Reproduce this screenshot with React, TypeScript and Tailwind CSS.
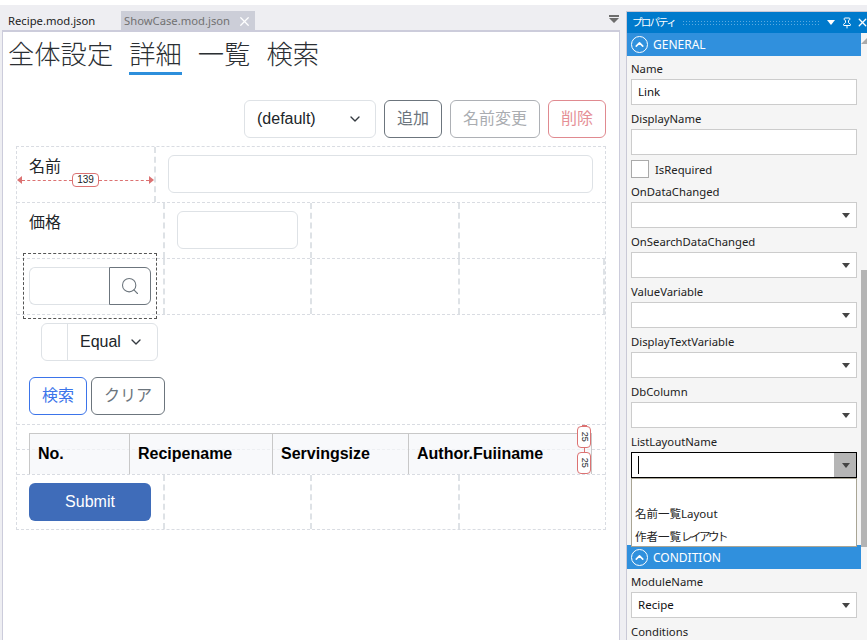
import React from 'react';
import { ChevronDown, ChevronUp, Pin, Search, X } from 'lucide-react';

const sans = "font-['Liberation_Sans','Noto_Sans_CJK_JP',sans-serif]";
const ide = "font-['Noto_Sans','Noto_Sans_CJK_JP',sans-serif]";
const cell = 'border-r-2 border-dashed border-[#dee2e6] last:border-r-0';
const row = 'flex border-b border-dashed border-[#d9dce2] last:border-b-0';

const SectionBar = ({ title, tall }: { title: string; tall?: boolean }) => (
  <div className={`flex shrink-0 items-center gap-[5px] bg-[#3090dd] pl-[4px] text-[12px] text-white ${tall ? 'h-[24px]' : 'h-[23px]'}`}>
    <span className="flex h-[17px] w-[17px] items-center justify-center rounded-full border border-white">
      <ChevronUp size={13} strokeWidth={3} />
    </span>
    <span className={tall ? 'pt-[1px]' : ''}>{title}</span>
  </div>
);

const ComboArrow = () => (
  <svg width="8" height="5" viewBox="0 0 8 5" className="absolute right-[6px] top-[10px]">
    <path d="M0 0h8L4 5z" fill="#444" />
  </svg>
);

const FieldLabel = ({ children }: { children: React.ReactNode }) => (
  <div className="h-[23px] pt-[3px] text-[11.3px] leading-[20px] text-[#222]">{children}</div>
);

const Field = ({ label, value, combo }: { label: string; value?: string; combo?: boolean }) => (
  <div className="flex h-[50px] shrink-0 flex-col">
    <FieldLabel>{label}</FieldLabel>
    <div className="relative flex h-[26px] w-[226px] items-center border border-[#ccc] bg-white pl-[6px] text-[11.5px] text-[#111]">
      {value}
      {combo && <ComboArrow />}
    </div>
  </div>
);

const PropertyPanel = () => (
  <aside className={`flex h-[629px] w-[241px] shrink-0 flex-col self-end overflow-hidden border-l border-t border-[#c9c9d6] bg-[#f5f5f5] ${ide}`}>
    <div className="flex h-[21px] shrink-0 items-center bg-[#007acc] pl-[5px] text-white">
      <span className="w-[50px] shrink-0 whitespace-nowrap text-[10.5px] tracking-[-1.8px]">プロパティ</span>
      <div className="h-[6px] w-[138px] shrink-0 bg-[radial-gradient(#5aa9e0_0.7px,transparent_0.8px)] bg-[length:3px_3px]" />
      <svg width="8" height="5" viewBox="0 0 8 5" className="ml-[7px] shrink-0">
        <path d="M0 0h8L4 5z" fill="#fff" />
      </svg>
      <Pin size={12} className="ml-[6px] shrink-0" />
      <X size={13} strokeWidth={2.5} className="ml-[3px] shrink-0" />
    </div>
    <div className="relative flex min-h-0 flex-1">
      <div className="flex w-[234px] shrink-0 flex-col">
        <SectionBar title="GENERAL" />
        <div className="flex flex-col pl-[4px]">
          <Field label="Name" value="Link" />
          <Field label="DisplayName" />
          <div className="flex h-[23px] shrink-0 items-start gap-[6px] pt-[4px] text-[11.3px] text-[#222]">
            <div className="h-[18px] w-[18px] border border-[#aaa] bg-white" />
            <span className="leading-[20px]">IsRequired</span>
          </div>
          <Field label="OnDataChanged" combo />
          <Field label="OnSearchDataChanged" combo />
          <Field label="ValueVariable" combo />
          <Field label="DisplayTextVariable" combo />
          <Field label="DbColumn" combo />
          <div className="relative flex h-[116px] shrink-0 flex-col">
            <FieldLabel>ListLayoutName</FieldLabel>
            <div className="relative flex h-[26px] w-[226px] items-center border border-black bg-white pl-[6px]">
              <div className="h-[18px] w-px bg-black" />
              <div className="absolute right-0 top-0 h-full w-[22px] bg-[#b5b5b5]" />
              <ComboArrow />
            </div>
            <div className="absolute left-0 top-[49px] z-10 flex h-[69px] w-[226px] flex-col justify-end border border-[#a9a595] bg-white pl-[3px] text-[11.5px] text-[#222]">
              <div className="flex h-[22px] items-center pt-[2px]">名前一覧Layout</div>
              <div className="flex h-[22px] items-center pt-[4px]">
                作者一覧<span className="tracking-[-2.5px]">レイアウト</span>
              </div>
            </div>
          </div>
        </div>
        <SectionBar title="CONDITION" tall />
        <div className="flex flex-col pl-[4px]">
          <Field label="ModuleName" value="Recipe" combo />
          <FieldLabel>Conditions</FieldLabel>
        </div>
      </div>
      <div className="flex w-[6px] shrink-0 flex-col">
        <svg width="6" height="6" viewBox="0 0 6 6" className="mt-[5px]">
          <path d="M6 0v6H0z" fill="#aaa" />
        </svg>
        <div className="mt-[226px] h-[277px] w-full bg-[#b4b4b4]" />
      </div>
    </div>
  </aside>
);

const Designer = () => (
  <div className={`flex h-full w-[618px] flex-col border-x border-t-2 border-[#ccccdb] bg-white ${sans} text-[16px] text-[#212529]`}>
    <nav className="ml-[5px] flex h-[43px] shrink-0 gap-[16px] text-[26.3px] font-light leading-[46px] text-[#2b2f33]">
      <span className="h-[43px]">全体設定</span>
      <span className="h-[43px] border-b-[3px] border-[#2d8fdc]">詳細</span>
      <span className="h-[43px]">一覧</span>
      <span className="h-[43px]">検索</span>
    </nav>
    <div className="mr-[13px] mt-[25px] flex h-[38px] shrink-0 justify-end gap-[8px]">
      <div className="flex w-[132px] items-center justify-between rounded-[6px] border border-[#dee2e6] px-[12px]">
        (default)
        <ChevronDown size={16} strokeWidth={2} className="text-[#343a40]" />
      </div>
      <button className="w-[58px] rounded-[6px] border border-[#6c757d] text-[#6c757d]">追加</button>
      <button className="w-[90px] rounded-[6px] border border-[#adb0b5] text-[#aaadb1]">名前変更</button>
      <button className="w-[58px] rounded-[6px] border border-[#e08a90] text-[#e58f96]">削除</button>
    </div>

    <div className="ml-[13px] mt-[8px] flex w-[590px] shrink-0 flex-col border border-dashed border-[#d9dce2]">
      <div className={`${row} h-[56px]`}>
        <div className={`${cell} relative w-[139px] pl-[12px] pt-[8px]`}>
          名前
          <div className="absolute left-0 right-0 top-[26px] flex items-center">
            <span className="h-0 w-0 border-y-[4px] border-r-[5px] border-y-transparent border-r-[#dc7272]" />
            <span className="flex-1 border-t border-dashed border-[#dc7272]" />
            <span className="rounded-[4px] border border-[#dc7272] bg-white px-[4px] text-[10px] leading-[12px]">139</span>
            <span className="flex-1 border-t border-dashed border-[#dc7272]" />
            <span className="h-0 w-0 border-y-[4px] border-l-[5px] border-y-transparent border-l-[#dc7272]" />
          </div>
        </div>
        <div className={`${cell} flex-1 pl-[12px] pt-[8px]`}>
          <div className="h-[38px] w-[425px] rounded-[6px] border border-[#dee2e6]" />
        </div>
      </div>

      <div className={`${row} h-[56px]`}>
        <div className={`${cell} w-[148px] pl-[12px] pt-[8px]`}>価格</div>
        <div className={`${cell} w-[147px] pl-[12px] pt-[8px]`}>
          <div className="h-[38px] w-[121px] rounded-[6px] border border-[#dee2e6]" />
        </div>
        <div className={`${cell} w-[148px]`} />
        <div className={`${cell} flex-1`} />
      </div>

      <div className={`${row} relative h-[56px]`}>
        <div className={`${cell} w-[148px] pl-[12px] pt-[8px]`}>
          <div className="flex h-[38px] w-[122px]">
            <div className="w-[80px] rounded-l-[6px] border border-r-0 border-[#dee2e6]" />
            <div className="flex w-[42px] items-center justify-center rounded-r-[6px] border border-[#6c757d] text-[#6c757d]">
              <Search size={20} strokeWidth={1.3} />
            </div>
          </div>
        </div>
        <div className={`${cell} w-[147px]`} />
        <div className={`${cell} w-[148px]`} />
        <div className={`${cell} flex-1`} />
        <div className="pointer-events-none absolute left-[6px] top-[-6px] h-[66px] w-[134px] border border-dashed border-[#555]" />
      </div>

      <div className={`${row} h-[110px] flex-col`}>
        <div className="ml-[24px] mt-[8px] flex h-[38px] w-[117px] rounded-[6px] border border-[#dee2e6]">
          <div className="w-[26px] border-r border-[#dee2e6]" />
          <div className="flex flex-1 items-center justify-between pl-[12px] pr-[13px]">
            Equal
            <ChevronDown size={16} strokeWidth={2} className="text-[#343a40]" />
          </div>
        </div>
        <div className="ml-[12px] mt-[16px] flex h-[38px] gap-[4px]">
          <button className="w-[58px] rounded-[6px] border border-[#3b74ea] text-[#3b74ea]">検索</button>
          <button className="w-[74px] rounded-[6px] border border-[#6c757d] text-[#6c757d]">クリア</button>
        </div>
      </div>

      <div className={`${row} relative h-[50px] pl-[12px] pt-[8px]`}>
        <div className="pointer-events-none absolute left-0 right-0 top-[24px] border-t border-dashed border-[#d9dce2]" />
        <div className="relative flex h-[41px] w-[563px] border border-b-0 border-[#c8c8c8] bg-[#f5f6f9]/70 text-[16px] font-bold leading-[39px] text-black">
          <div className="w-[100px] border-r border-[#c8c8c8] pl-[8px]">No.</div>
          <div className="w-[143px] border-r border-[#c8c8c8] pl-[8px]">Recipename</div>
          <div className="w-[136px] border-r border-[#c8c8c8] pl-[8px]">Servingsize</div>
          <div className="flex-1 pl-[8px]">Author.Fuiiname</div>
        </div>
        <div className="absolute left-[560px] top-0 flex flex-col items-center">
          <div className="h-px w-[5px] bg-[#dc7272]" />
          <div className="flex h-[22px] w-[14px] items-center justify-center rounded-[4px] border border-[#dc7272] bg-white text-[9px]">
            <span className="rotate-90">25</span>
          </div>
          <div className="h-[4px] w-px bg-[#dc7272]" />
          <div className="flex h-[22px] w-[14px] items-center justify-center rounded-[4px] border border-[#dc7272] bg-white text-[9px]">
            <span className="rotate-90">25</span>
          </div>
        </div>
      </div>

      <div className={`${row} h-[54px]`}>
        <div className={`${cell} w-[148px] pl-[12px] pt-[8px]`}>
          <button className="h-[38px] w-[122px] rounded-[6px] bg-[#3f6cb9] text-white">Submit</button>
        </div>
        <div className={`${cell} w-[147px]`} />
        <div className={`${cell} w-[148px]`} />
        <div className={`${cell} flex-1`} />
      </div>
    </div>
  </div>
);

export default function App() {
  return (
    <div className="h-[640px] w-[867px] overflow-hidden bg-white pt-[5px]">
      <div className="flex h-[635px] bg-[#eeeef2]">
        <div className="ml-[2px] flex h-full w-[619px] shrink-0 flex-col">
          <div className={`relative flex h-[25px] shrink-0 items-end text-[11.25px] ${ide}`}>
            <span className="ml-[6px] flex h-[20px] w-[113px] items-center pt-[2px] text-[#222]">Recipe.mod.json</span>
            <span className="flex h-[19px] w-[134px] items-center justify-between bg-[#ccced8] px-[3px] pt-[1px] text-[#717171]">
              ShowCase.mod.json
              <X size={15} strokeWidth={2} className="text-white" />
            </span>
            <svg width="10" height="8" viewBox="0 0 10 8" className="absolute right-[2px] top-[10px]">
              <path d="M0 0h10v2H0zM0 3h10L5 8z" fill="#6d6d6d" />
            </svg>
          </div>
          <Designer />
        </div>
        <div className="w-[5px] shrink-0" />
        <PropertyPanel />
      </div>
    </div>
  );
}
